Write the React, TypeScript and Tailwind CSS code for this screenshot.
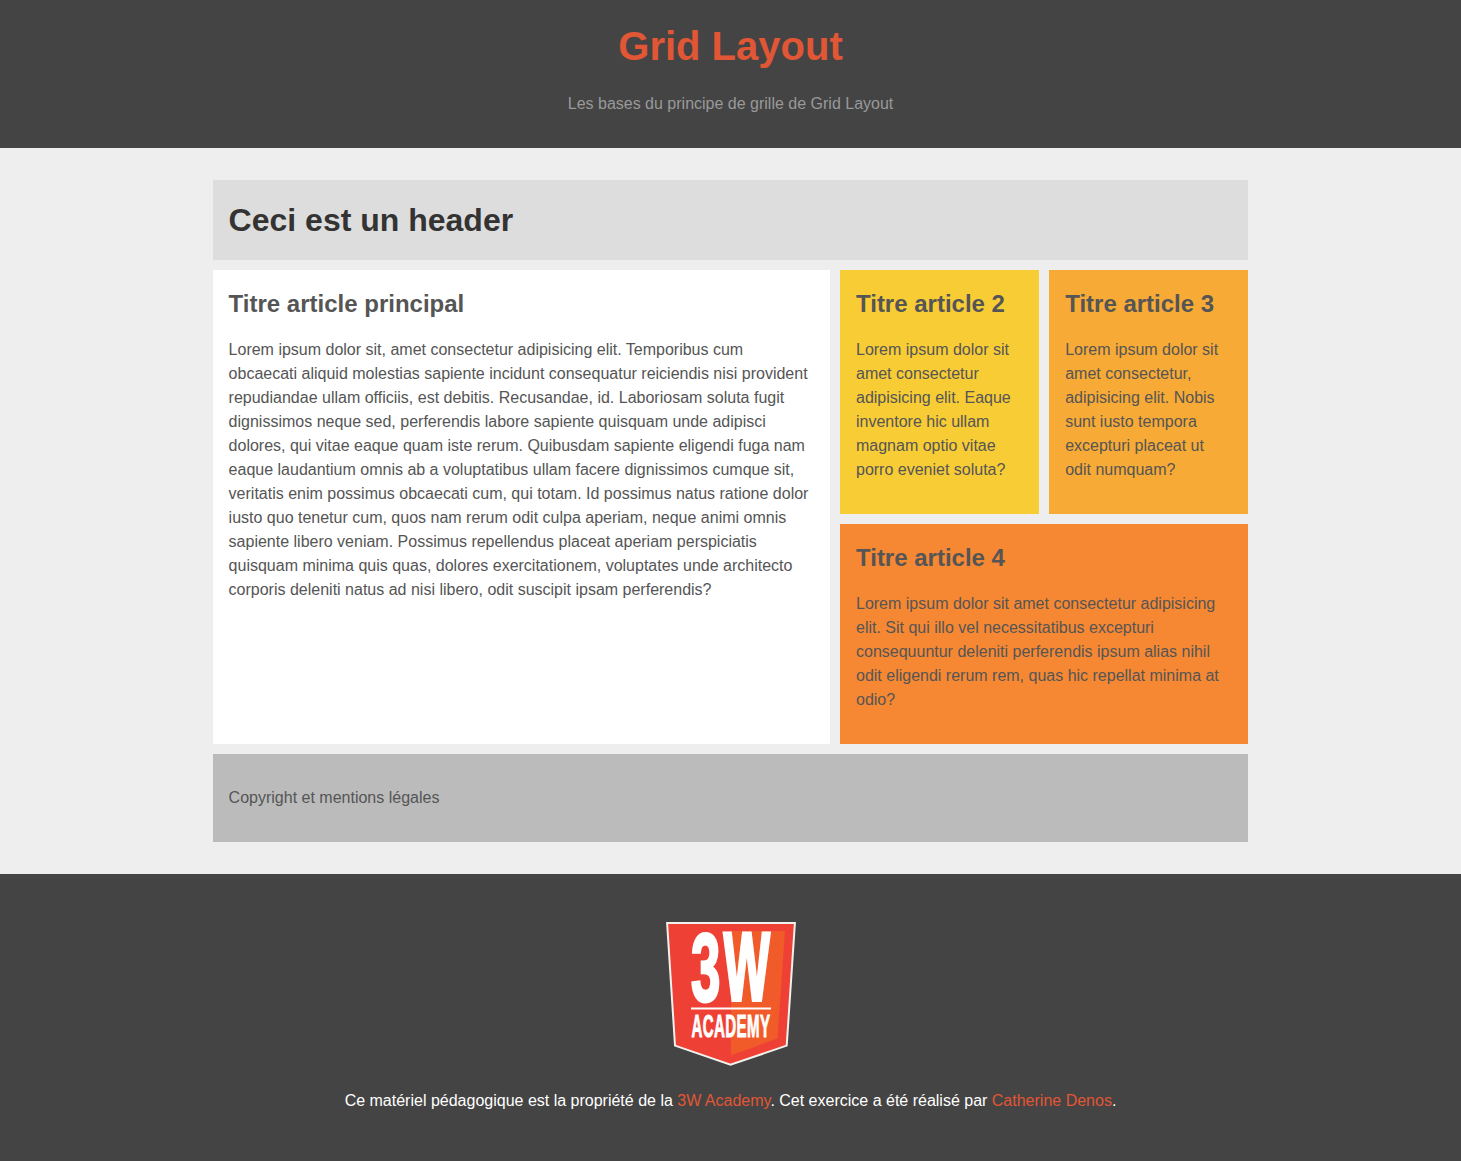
import type { ReactNode } from 'react';

const Article = ({ title, className, children }: { title: string; className: string; children: ReactNode }) => (
  <article className={`p-4 ${className}`}>
    <h2 className="text-[24px] leading-9 font-bold whitespace-nowrap">{title}</h2>
    <p className="my-4">{children}</p>
  </article>
);

const Logo = () => (
  <svg width="130" height="144" viewBox="0 0 130 144" className="mx-auto block overflow-visible" role="img" aria-label="3W Academy">
    <path d="M1.1 1H128.9L120.7 123.6L64.5 142.8L9 123.6Z" fill="#ef4036" stroke="#f1f1ee" strokeWidth="2" />
    <path d="M65 9H119L111.5 116.5L65 133.3Z" fill="#f15a29" />
    <g fill="#fff" stroke="#fff" fontFamily="Liberation Sans" fontWeight="700" strokeLinejoin="miter">
      <text transform="translate(25 78.6) scale(.545 1)" fontSize="97" strokeWidth="3">3</text>
      <text transform="translate(57.8 78.3) scale(.503 1)" fontSize="97" strokeWidth="4">W</text>
      <text transform="translate(25.4 114.7) scale(.472 1)" fontSize="32" strokeWidth="1" letterSpacing="0.8">ACADEMY</text>
    </g>
    <path d="M25 86.4H105" stroke="#fff" strokeWidth="2" />
  </svg>
);

export default function App() {
  return (
    <div className="flex min-h-[1161px] flex-col bg-[#eee] font-['Liberation_Sans',Arial,sans-serif] text-[16px] leading-6 text-[#555]">
      <header className="h-[148px] bg-[#444] pt-4 text-center">
        <h1 className="text-[40px] leading-[60px] font-bold text-[#e15635]">Grid Layout</h1>
        <p className="mt-4 text-[#999]">Les bases du principe de grille de Grid Layout</p>
      </header>
      <main className="mx-auto grid h-[726px] w-[1035.8px] grid-cols-[617.4px_199.2px_199.2px] grid-rows-[80px_244px_220px_88px] gap-[10px] py-8">
        <header className="col-span-3 bg-[#ddd] p-4">
          <h1 className="text-[32px] leading-12 font-bold text-[#333]">Ceci est un header</h1>
        </header>
        <Article title="Titre article principal" className="row-span-2 bg-white">
          Lorem ipsum dolor sit, amet consectetur adipisicing elit. Temporibus cum obcaecati aliquid molestias sapiente
          incidunt consequatur reiciendis nisi provident repudiandae ullam officiis, est debitis. Recusandae, id.
          Laboriosam soluta fugit dignissimos neque sed, perferendis labore sapiente quisquam unde adipisci dolores, qui
          vitae eaque quam iste rerum. Quibusdam sapiente eligendi fuga nam eaque laudantium omnis ab a voluptatibus
          ullam facere dignissimos cumque sit, veritatis enim possimus obcaecati cum, qui totam. Id possimus natus
          ratione dolor iusto quo tenetur cum, quos nam rerum odit culpa aperiam, neque animi omnis sapiente libero
          veniam. Possimus repellendus placeat aperiam perspiciatis quisquam minima quis quas, dolores exercitationem,
          voluptates unde architecto corporis deleniti natus ad nisi libero, odit suscipit ipsam perferendis?
        </Article>
        <Article title="Titre article 2" className="bg-[#f8cc35]">
          Lorem ipsum dolor sit amet consectetur adipisicing elit. Eaque inventore hic ullam magnam optio vitae porro
          eveniet soluta?
        </Article>
        <Article title="Titre article 3" className="bg-[#f7aa35]">
          Lorem ipsum dolor sit amet consectetur, adipisicing elit. Nobis sunt iusto tempora excepturi placeat ut odit
          numquam?
        </Article>
        <Article title="Titre article 4" className="col-span-2 bg-[#f68833]">
          Lorem ipsum dolor sit amet consectetur adipisicing elit. Sit qui illo vel necessitatibus excepturi
          consequuntur deleniti perferendis ipsum alias nihil odit eligendi rerum rem, quas hic repellat minima at odio?
        </Article>
        <footer className="col-span-3 bg-[#bbb] px-4 py-8">
          <p>Copyright et mentions légales</p>
        </footer>
      </main>
      <footer className="h-[287px] bg-[#444] pt-12 text-center text-white">
        <Logo />
        <p className="mt-[23px]">
          Ce matériel pédagogique est la propriété de la <a className="text-[#e15635]">3W Academy</a>. Cet exercice a
          été réalisé par <a className="text-[#e15635]">Catherine Denos</a>.
        </p>
      </footer>
    </div>
  );
}
